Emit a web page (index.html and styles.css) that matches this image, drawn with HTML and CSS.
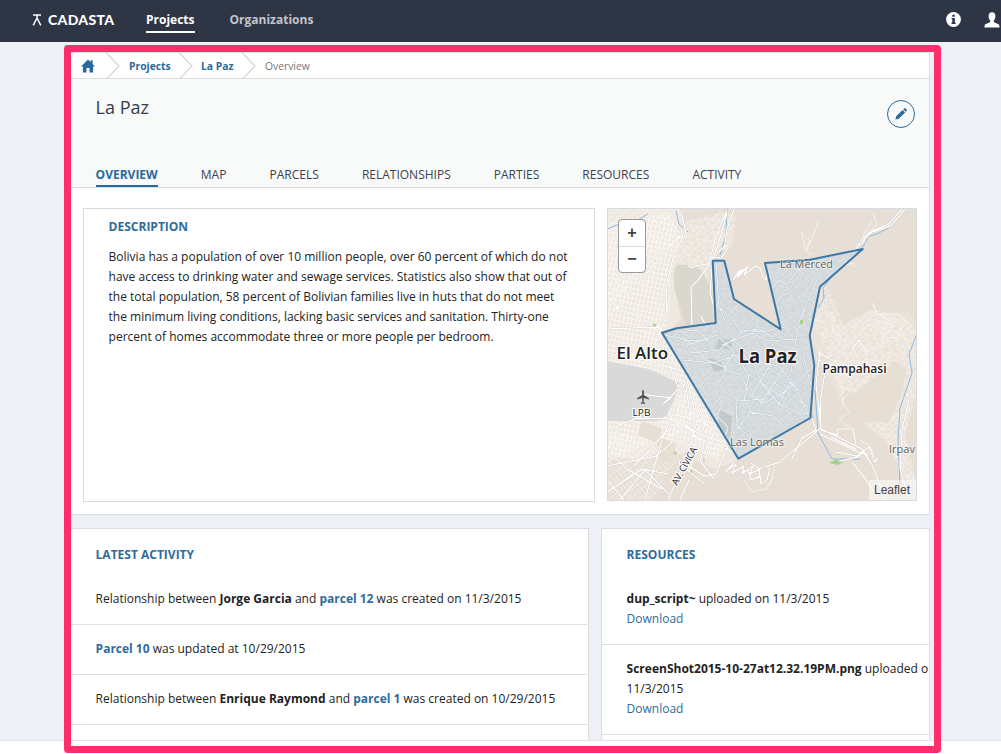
FILE: index.html
```html
<!DOCTYPE html>
<html lang="en">
<head>
<meta charset="utf-8">
<title>La Paz - Cadasta</title>
<link rel="stylesheet" href="styles.css">
</head>
<body>
<header class="topbar">
  <a class="brand"><svg class="brand-mark" viewBox="0 0 10 12" width="10" height="12"><path d="M1 1h8M1.2 11.3 5 4l3.8 7.3M5 1v4" fill="none" stroke="#fff" stroke-width="1.5"/></svg><span>CADASTA</span></a>
  <nav class="mainnav"><a class="active">Projects</a><a>Organizations</a></nav>
  <div class="tools">
    <svg width="15" height="15" viewBox="0 0 15 15"><circle cx="7.5" cy="7.5" r="7.4" fill="#fff"/><path d="M6.3 2.8h2.5v2H6.3zM5.6 6h3.2v4.6h.8V12H5.5v-1.4h.8V7.3h-.7z" fill="#2e3545"/></svg>
    <svg width="16" height="16" viewBox="0 0 16 16"><path d="M8 .3c2.3 0 3.4 1.6 3.4 3.9 0 1.800-.7 3.300-1.600 4.200v1.500l4.700 2.300c.7.4 1 1 1 3.300H.5c0-2.300.3-2.900 1-3.300l4.700-2.300V8.400C5.300 7.500 4.600 6 4.600 4.200 4.600 1.900 5.700.3 8 .3z" fill="#fff"/></svg>
  </div>
</header>
<main class="page">
  <section class="project">
    <nav class="crumbs">
      <svg class="home" width="14" height="14" viewBox="0 0 14 14"><path d="M7 .5 9.600 3V1.300h2v3.600L14 7.400h-1.900V13.500H8.500V9h-3v4.500H1.900V7.400H0z" fill="#2a6a9b"/></svg>
      <svg class="chev" width="14" height="26" viewBox="0 0 14 26"><path d="M.5 0 13 13 .5 26"/></svg>
      <a class="c1">Projects</a>
      <svg class="chev" width="14" height="26" viewBox="0 0 14 26"><path d="M.5 0 13 13 .5 26"/></svg>
      <a class="c2">La Paz</a>
      <svg class="chev" width="14" height="26" viewBox="0 0 14 26"><path d="M.5 0 13 13 .5 26"/></svg>
      <span>Overview</span>
    </nav>
    <div class="project-head">
      <div class="title-row">
        <h1>La Paz</h1>
        <a class="edit"><svg width="12" height="12" viewBox="0 0 12 12"><path d="M.4 11.600 1.200 8.200 7.600 1.900 10.100 4.400 3.800 10.800zM8.200 1.300 9.200.4c.5-.4 1-.3 1.400 0l1 1c.4.400.4.900 0 1.400l-.9 1z" fill="#2a6a9b"/></svg></a>
      </div>
      <nav class="tabs"><a class="active">OVERVIEW</a><a>MAP</a><a>PARCELS</a><a>RELATIONSHIPS</a><a>PARTIES</a><a>RESOURCES</a><a>ACTIVITY</a></nav>
    </div>
    <div class="project-body">
      <article class="description">
        <h2>DESCRIPTION</h2>
        <p>Bolivia has a population of over 10 million people, over 60 percent of which do not<br>have access to drinking water and sewage services. Statistics also show that out of<br>the total population, 58 percent of Bolivian families live in huts that do not meet<br>the minimum living conditions, lacking basic services and sanitation. Thirty-one<br>percent of homes accommodate three or more people per bedroom.</p>
      </article>
      <div class="map">
        <svg class="map-canvas" viewBox="608 209 308 291" width="308" height="291">
          <defs>
            <pattern id="grid" width="4" height="5" patternUnits="userSpaceOnUse" patternTransform="rotate(12)"><path d="M0 .5H4M.5 0V5" stroke="#fff" stroke-width=".75" fill="none"/></pattern>
            <pattern id="grid2" width="4" height="6" patternUnits="userSpaceOnUse" patternTransform="rotate(-38)"><path d="M0 .5H4M.5 0V6" stroke="#fff" stroke-width=".8" fill="none"/></pattern>
            <pattern id="hill" width="17" height="15" patternUnits="userSpaceOnUse" patternTransform="rotate(-25)"><path d="M0 3q4-4 7 0t5 0l5 0M2 6h10l2 3h3M0 9l4-2 3 4 4-1 6 1M0 13q4-3 8 0t9 0M4 0v7M9 3l1 8M14 0v9M6 10v5" stroke="#fff" stroke-width=".8" fill="none"/></pattern>
            <clipPath id="zone"><path id="zone-path" d="M712.700 260.700H724.300L734 299 780.700 329.300 765 263 810 259.700 862.700 249 820 286.700 809.700 335.700 814.300 365.700 810.300 418 738.300 458.700 662 332.700 676.700 328.300 715.700 323z"/></clipPath>
          </defs>
          <rect x="607" y="208" width="310" height="293" fill="#e7dfd6"/>
          <path d="M607 208h72l9 24-15 42 8 46-18 15 28 50 30 53 18 22-24 9-40-17-32 8-36-3z" fill="#efe8e0"/>
          <path d="M607 223l61-10 14 23-11 40-2 40-6 20 38 64 28 44-12 16-29-18-41 1-40 20z" fill="url(#grid)" opacity=".7"/>
          <path d="M607 208h78l-9 25-69 79zM607 432l58 12 26-75 40 70-15 20-25-11-40 53h-44z" fill="url(#grid2)" opacity=".4"/>
          <path d="M685 222l37-10 14 4-4 30-14 6-14 35-14-15-13-10zM808 330l15-28 20 24 26-15 40 1 8 14v60l-12 50 12 50h-8l-24-45-40-30-28-60z" fill="#ebe3da"/>
          <path d="M685 222l37-10 14 4-4 30-14 6-14 35-14-15-13-10zM812 320l10-38 12 14 9 30 28-18 36 12 10 14v60l-12 40 12 50h-8l-24-45-40-30-20-60z" fill="url(#hill)" opacity=".55"/>
          <path d="M845 390l10 3 28-22 12-10 12 9-6 26-13 27-16-2-19 5-10-12zM846 300l28-10 6 14-24 14z" fill="#e6ddd3"/>
          <path d="M675 266q12-4 27 4l10 20 1 32-27 4-12-38z" fill="#d9d7ce"/>
          <path d="M607 361l42 8 32 15-14 31-9 6-51 0z" fill="#d9d9da"/>
          <path d="M642 421l20 7-2 9 16 7-4 19-13-2-2-18-19-8zM661 478l30-32 8 42-20 12z" fill="#e8dfd4"/>
          <g class="water">
            <path d="M607 229l10-4 17-3 14-8M676 211l3 13 9 8M727 209l-1 26-6 20M905 209l-13 17-15 8-8 2-7 12M832 276l-9 12 1 10-6 10M916 336l-7 18 3 19-12 35-2 32 2 45M815 390l3 43 14 26 28 0 M765 367l18 13 20 18 10 20"/>
          </g>
          <g class="roads">
            <path d="M607 290l76-55M607 318l73-83M655 209l-21 20M683 236l-10 22-6 25-1 34-8 20M681 212l6 25M607 329l50-2 8 5M612 305l48 22M727 213l-9 32-5 13-14 21-8 8 1 40M734 209l-7 20-3 20M717 254q12-14 11-6l-6 9-12 1M688 265q4 5 7 1l12-2 5-12 4-16 5-11 6-15M713 258l-3 34 3 12M701 316l6 12M733 280l7-10-6 8 9-9-6 9 11-12-4 9 11-9 5 2 3 9 3 3 2-11 6 2"/>
            <path d="M905 209l-14 17-19 6-12 12-4 5-25 8M902 209l-13 15-19 8-10 9"/>
            <path d="M607 353l43 8 45 14M640 394l31 4-8 6 22-21-24 60-16 57M607 430l30-12 34 1 29 15 38 13M607 466l49-10 20-17 15-14-5-40M658 334l20 53 9-10-4-13M668 500l18-42 20-65M687 380l7 27-8 18 18 21-4 15 14 18M607 450l20 19 35 20M620 500l25-30 24 24M607 492l35-23 26 5M607 480l17 20M634 466l38-40M684 463l20 13 12-2 12-28M690 435l44 17M687 470l18 14M722 404l-18 59M713 400l-24 72M696 420l38 16M689 480l-9 20"/>
            <path d="M735 462l-10 10 11-8-4 9 12-7-2 8 11-8-3 8 13-7 M751 463l8 6 2 15 6-4 3-13M765 467l15-5 9-8 10-8 15-12 6-6M742 472l6-2 3 10 10-4M820 350l-4 34 5 46 16 5 1-6 15 0 3 15M812 418l4 12-14 8-10 20M825 372l-5 30 1 25M821 429l15 7 26 13 10 16 14 35M820 434l38 18 10 3M831 437l25 12M836 452l21 4 12-9 6 15 3-4M832 463l26-6 8-8M852 462l12 15 10 15M909 400l-7 30-2 38 8 30M852 350l7-10 9 15M818 352l10 6 5-4M820 360l8 15"/>
          </g>
          <g class="paths">
            <path d="M872 222l-9 13 2 7-8 3M801 231l5 20 9-20 3-9M802 233l8 8-4 10 6 4M842 255l15 13M845 265l9-2M873 213l4 12-6 5 12-2"/>
            <path d="M825 312l10 8-3 12 10 5-6 12 12 8-8 14M873 302l3 10 14 9-9 12 3 9-12 8M849 427l-10-8 10-6-7-12 8-10-12-6M861 441l9 5 4 9M871 303l8 12 20-1 14 14M860 330l18-9 16 4-12 12 16 1M905 320l-6 15 14 8M744 480l8 12 14-3 8-12M775 465l-5 20"/>
          </g>
          <g clip-path="url(#zone)">
            <rect x="650" y="240" width="220" height="225" fill="#d2d7da"/>
            <rect x="650" y="240" width="220" height="225" fill="url(#hill)" opacity=".3"/>
            <path class="park" d="M719 338l14 3-3 8-15 0zM708 358l12 3 5 8-11 3zM720 410l12 6-2 22-13-12z"/>
            <path class="city-road" d="M716 262l3 45 16 35 22 20 22 4 15 20 17 33M716 305l15 12 10 15 18-3 13 8 10-9M722 345l30-12 16 8 28-2M675 332l22-2 12 11-25-1 7 13 28-3 26-20 16 2 23-5M688 345l29-10 17 17-10 17 17 6 9 20 14 8 20-11 17-16M664 335l21 4 22 21 20 8-10 18 22 15 24-2M683 360l30 3 23-8 13 20-5 25 9 15M709 376l-12 13 11 15 3 20 9 15M715 389l7 15-5 12 11 11-4 15 12 8M737 400l-1 25 17 15M736 430l14-18 23 4 14 13M751 355l11 29 17 20 24 11M750 375l59 40M758 371l50 36M763 363l46 35M770 365l-20 33M782 371l-22 34M792 378l-17 34M769 293l6 12-8 12 14 4 8 12M862 249l-33 26-16 20M819 275l-20 47-8 50M788 293l-9 5-5 10M803 295l0 60 9 35M769 292l10-12 8 5 12-16 10 13"/>
          </g>
          <use href="#zone-path" fill="none" stroke="#3c78a7" stroke-width="2" stroke-linejoin="round"/>
          <path d="M829 463l8-4 3 3 5-1-7 4zM800 320h3v4h-3zM653 323l4 2-3 2zM674 451l3 2-2 3zM690 469l3 2-2 2zM703 458l2 2-1 3z" fill="#aace8c"/>
          <path d="M642.100 391q.9-2 1.800 0v4l5 3.200v1.300l-5-1.500-.3 4 1.500 1v1l-2.100-.4-2.100.4v-1l1.500-1-.3-4-5 1.500v-1.300l5-3.200z" fill="#555"/>
          <g class="labels">
            <text x="616.500" y="358.500" font-size="17" font-weight="600" textLength="51.500" lengthAdjust="spacingAndGlyphs">El Alto</text>
            <text x="738.500" y="362.500" font-size="19" font-weight="700" textLength="58" lengthAdjust="spacingAndGlyphs">La Paz</text>
            <text x="822.500" y="373" font-size="12" font-weight="600" textLength="64" lengthAdjust="spacingAndGlyphs">Pampahasi</text>
            <text class="minor" x="780" y="268" font-size="11" textLength="53" lengthAdjust="spacingAndGlyphs">La Merced</text>
            <text class="minor" x="730" y="446" font-size="11" textLength="54" lengthAdjust="spacingAndGlyphs">Las Lomas</text>
            <text class="minor" x="889" y="453" font-size="11" textLength="26" lengthAdjust="spacingAndGlyphs">Irpav</text>
            <text x="632.500" y="415.500" font-size="9.500" textLength="18" lengthAdjust="spacingAndGlyphs">LPB</text>
            <text transform="translate(677 486) rotate(-61)" font-size="9.500" textLength="42">AV. CÍVICA</text>
          </g>
        </svg>
        <div class="zoomer"><a>+</a><a>−</a></div>
        <div class="credit">Leaflet</div>
      </div>
    </div>
  </section>
  <div class="columns">
    <section class="card activity">
      <h2>LATEST ACTIVITY</h2>
      <ul>
        <li>Relationship between <b>Jorge Garcia</b> and <a>parcel 12</a> was created on 11/3/2015</li>
        <li><a>Parcel 10</a> was updated at 10/29/2015</li>
        <li>Relationship between <b>Enrique Raymond</b> and <a>parcel 1</a> was created on 10/29/2015</li>
      </ul>
    </section>
    <section class="card resources">
      <h2>RESOURCES</h2>
      <ul>
        <li><b>dup_script~</b> uploaded on 11/3/2015<br><a>Download</a></li>
        <li><b>ScreenShot2015-10-27at12.32.19PM.png</b> uploaded o<br>11/3/2015<br><a>Download</a></li>
      </ul>
    </section>
  </div>
</main>
<footer class="footer"></footer>
<div class="highlight"></div>
</body>
</html>
```
FILE: styles.css
```css
* { box-sizing: border-box; }
body { margin: 0; width: 1001px; height: 754px; overflow: hidden; background: #edf1f5; color: #222; font: 12px/20px "Open Sans", "Noto Sans", sans-serif; display: flex; flex-direction: column; position: relative; }
h1, h2, p, ul { margin: 0; padding: 0; font-weight: normal; }
ul { list-style: none; }

.topbar { height: 42px; flex: none; background: #2e3545; display: flex; align-items: flex-start; color: #fff; }
.brand { display: flex; align-items: center; gap: 6px; padding: 10px 0 0 32px; width: 146px; font: 900 14px/20px Lato, sans-serif; }
.brand-mark { flex: none; }
.brand span { letter-spacing: .3px; }
.mainnav { display: flex; gap: 35px; padding-top: 10px; font-weight: 700; }
.mainnav a { height: 23px; color: #c3c5ca; }
.mainnav .active { color: #fff; border-bottom: 2px solid #fff; }
.tools { display: flex; gap: 23px; margin-left: auto; padding-top: 12px; width: 55px; }
.tools svg { flex: none; }

.page { height: 698px; flex: none; padding: 10px 0 0 70px; overflow: hidden; }
.project { width: 860px; height: 463px; border: 1px solid #d8dee2; background: #fff; }
.crumbs { height: 26px; display: flex; align-items: center; font-size: 10.300px; color: #777; border-bottom: 1px solid #d8dfe1; }
.crumbs a { color: #2a6a9b; font-weight: 700; }
.home { margin: 0 11px 0 10px; }
.chev { fill: none; stroke: #d0d6da; stroke-width: 1.2; }
.crumbs .c1 { width: 50px; margin-left: 9px; }
.crumbs .c2 { width: 41px; margin-left: 8px; }
.crumbs span { margin-left: 9px; }
.project-head { height: 109px; background: #f8faf9; border-bottom: 1px solid #d8dee0; padding: 13px 14px 0 24.600px; display: flex; flex-direction: column; justify-content: space-between; }
.title-row { display: flex; justify-content: space-between; }
.title-row h1 { font-size: 18px; line-height: 30px; color: #363d4b; }
.edit { width: 28px; height: 28px; margin-top: 8px; border: 1px solid #2a6a9b; border-radius: 50%; display: flex; align-items: center; justify-content: center; }
.tabs { display: flex; gap: 43.100px; color: #3a414f; }
.tabs a { height: 23px; padding-top: 1px; }
.tabs .active { color: #2a6a9b; font-weight: 700; border-bottom: 2px solid #2a6a9b; }

.project-body { display: flex; gap: 12px; padding: 20px 12px 0; }
.description { width: 512px; height: 294px; border: 1px solid #d8dcde; padding: 8px 20px 0 24.600px; white-space: nowrap; }
h2 { color: #2f6c9b; font-size: 12px; font-weight: 700; }
.description p { padding-top: 10px; }
.map { width: 310px; height: 293px; border: 1px solid #d5dbe0; position: relative; }
.map-canvas { display: block; }
.water { fill: none; stroke: #8eb9df; stroke-width: 1; }
.roads { fill: none; stroke: #fff; stroke-width: 1.500; stroke-linejoin: round; filter: drop-shadow(0 0 .7px #a0968a); }
.paths { fill: none; stroke: #f7f3ee; stroke-width: .9; stroke-linejoin: round; }
.park { fill: #c3c9c8; }
.city-road { fill: none; stroke: #e7eef4; stroke-width: 1.500; stroke-linejoin: round; filter: drop-shadow(0 0 .7px #87929a); }
.labels { font-family: "Open Sans", sans-serif; fill: #222; stroke: #fff; stroke-opacity: .85; stroke-width: 2.500px; stroke-linejoin: round; paint-order: stroke; }
.labels .minor { fill: #68635f; stroke-opacity: .4; }
.zoomer { position: absolute; left: 10px; top: 10px; width: 28px; height: 54px; border: 1px solid #999; border-radius: 4px; background: #fff; overflow: hidden; }
.zoomer a { display: block; height: 26px; text-align: center; font: 700 16px/26px "Liberation Sans", sans-serif; color: #444; }
.zoomer a + a { border-top: 1px solid #ddd; line-height: 24px; }
.credit { position: absolute; right: 0; bottom: 0; width: 47px; height: 20px; padding-left: 5px; background: rgba(255,255,255,.5); font: 12px/20px "Liberation Sans", sans-serif; color: #444; }

.columns { display: flex; gap: 12px; padding-top: 13px; }
.card { background: #fff; border: 1px solid #d8dee2; height: 230px; overflow: hidden; white-space: nowrap; }
.card h2 { padding: 16px 0 10px 24.600px; }
.card a { color: #2f6c9b; }
.card li { padding: 14px 0 15px 24.600px; border-bottom: 1px solid #dcdee0; }
.activity { width: 519px; padding-right: 1px; }
.activity li a { font-weight: 700; }
.resources { width: 329px; }
.footer { flex: 1; background: #fff; border-top: 1px solid #e2e5e8; }
.highlight { position: absolute; left: 64px; top: 45px; width: 877px; height: 708px; border: 7px solid #ff2d6b; border-radius: 4px; pointer-events: none; }
```
